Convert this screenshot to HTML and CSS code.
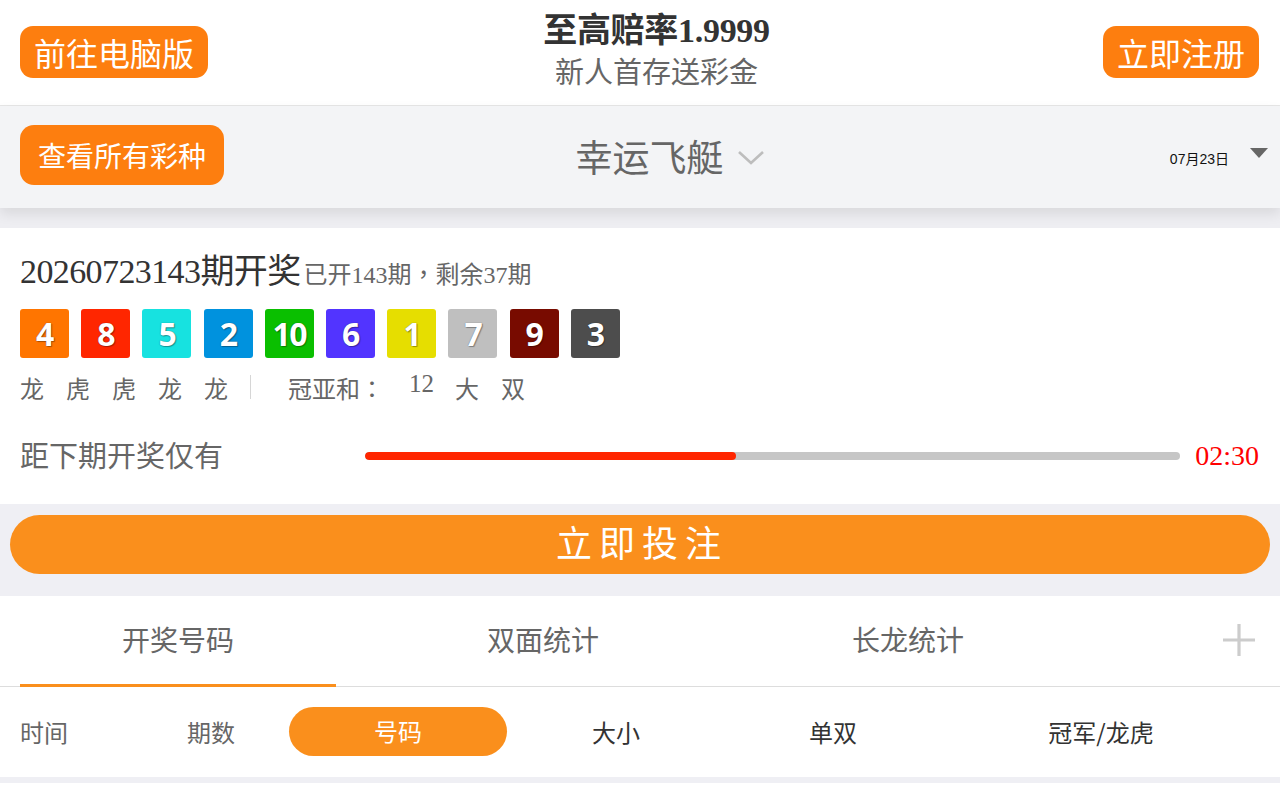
FILE: index.html
```html
<!DOCTYPE html>
<html lang="zh-CN">
<head>
<meta charset="utf-8">
<title>幸运飞艇</title>
<link rel="stylesheet" href="styles.css">
</head>
<body>
<header class="top">
  <a class="btn-orange btn-top">前往电脑版</a>
  <div class="promo">
    <div class="promo-title">至高赔率1.9999</div>
    <div class="promo-sub">新人首存送彩金</div>
  </div>
  <a class="btn-orange btn-top">立即注册</a>
</header>

<section class="lottery-bar">
  <div class="bar-left"><a class="btn-orange btn-all">查看所有彩种</a></div>
  <div class="bar-center">
    <span class="game-name">幸运飞艇</span>
    <svg class="chev" width="28" height="16" viewBox="0 0 28 16"><path d="M2 2 L14 13 L26 2" fill="none" stroke="#bdbdbd" stroke-width="2.6"/></svg>
  </div>
  <div class="bar-right">
    <span class="date">07月23日</span>
    <span class="tri"></span>
  </div>
</section>

<div class="shadow-gap"></div>

<section class="result">
  <div class="issue"><span class="issue-no">20260723143期开奖</span><span class="issue-info">已开143期<span class="punct" lang="zh-TW">，</span>剩余37期</span></div>
  <div class="balls">
    <span class="ball c1">4</span>
    <span class="ball c2">8</span>
    <span class="ball c3">5</span>
    <span class="ball c4">2</span>
    <span class="ball c5">10</span>
    <span class="ball c6">6</span>
    <span class="ball c7">1</span>
    <span class="ball c8">7</span>
    <span class="ball c9">9</span>
    <span class="ball c10">3</span>
  </div>
  <div class="stats">
    <span>龙</span><span>虎</span><span>虎</span><span>龙</span><span>龙</span>
    <span class="sep"></span>
    <span>冠亚和<span class="punct" lang="zh-TW">：</span></span><span class="num">12</span><span>大</span><span>双</span>
  </div>
  <div class="countdown">
    <span class="cd-label">距下期开奖仅有</span>
    <div class="progress"><div class="progress-fill" style="width:45.5%"></div></div>
    <span class="cd-time">02:30</span>
  </div>
</section>

<section class="bet-wrap">
  <a class="bet-btn">立即投注</a>
</section>

<section class="tabs-box">
  <nav class="tabs">
    <span class="tab active">开奖号码</span>
    <span class="tab">双面统计</span>
    <span class="tab">长龙统计</span>
    <svg class="plus" width="34" height="34" viewBox="0 0 34 34"><path d="M17 1 V33 M1 17 H33" stroke="#cccccc" stroke-width="3.2"/></svg>
  </nav>
  <div class="subtabs">
    <span class="st st-left muted">时间</span>
    <span class="st muted">期数</span>
    <span class="st"><span class="pill">号码</span></span>
    <span class="st">大小</span>
    <span class="st">单双</span>
    <span class="st">冠军/龙虎</span>
  </div>
</section>
<div class="bottom-gap"></div>
<div class="bottom-white"></div>
</body>
</html>
```

FILE: styles.css
```css
* { box-sizing: border-box; }
html, body { margin: 0; padding: 0; }
body {
  width: 1280px;
  height: 800px;
  overflow: hidden;
  background: #ffffff;
  font-family: "Liberation Serif", "Noto Sans CJK SC", serif;
  color: #333;
}
a { text-decoration: none; }

.btn-orange {
  display: inline-flex;
  align-items: center;
  justify-content: center;
  background: #fd7e0f;
  color: #fff;
  font-family: "Noto Sans CJK SC", sans-serif;
}

.top {
  height: 106px;
  border-bottom: 1px solid #e6e6e6;
  display: flex;
  align-items: center;
  justify-content: space-between;
  padding: 0 21px 0 20px;
}
.btn-top {
  height: 52px;
  padding: 0 14px;
  font-size: 32px;
  border-radius: 13px;
  margin-top: -1px;
}
.promo { text-align: center; margin-left: 2px; margin-top: -6px; }
.promo-title {
  font-size: 34px;
  font-weight: 700;
  line-height: 40px;
  color: #333;
  letter-spacing: -0.3px;
}
.promo-sub {
  font-family: "Noto Sans CJK SC", sans-serif;
  font-size: 29px;
  line-height: 38px;
  color: #666;
}

.lottery-bar {
  height: 102px;
  background: #f3f4f6;
  display: grid;
  grid-template-columns: 1fr auto 1fr;
  align-items: center;
  padding: 0 12px 0 20px;
  position: relative;
  z-index: 1;
  box-shadow: 0 6px 12px rgba(0,0,0,0.09);
}
.btn-all {
  height: 60px;
  padding: 0 18px;
  font-size: 28px;
  border-radius: 14px;
  margin-top: -4px;
}
.bar-center {
  display: flex;
  align-items: center;
  margin-left: 52px;
}
.game-name {
  font-family: "Noto Sans CJK SC", sans-serif;
  font-size: 37px;
  color: #666;
  margin-top: -3px;
}
.chev { margin-left: 13px; margin-top: 2px; }
.bar-right {
  display: flex;
  align-items: center;
  justify-content: flex-end;
  margin-top: -2px;
}
.date {
  font-family: "Liberation Sans", "Noto Sans CJK SC", sans-serif;
  font-size: 14px;
  color: #111;
  margin-top: 4px;
}
.tri {
  width: 0; height: 0;
  border-left: 9px solid transparent;
  border-right: 9px solid transparent;
  border-top: 10px solid #666;
  margin-left: 21px;
  margin-top: -6px;
}

.shadow-gap {
  height: 20px;
  background: #eeeef2;
}

.result {
  background: #fff;
  padding: 22px 21px 18px 20px;
}
.issue { line-height: 44px; height: 44px; }
.issue-no { font-size: 34px; color: #333; letter-spacing: -0.6px; }
.issue-info { font-size: 24px; color: #666; margin-left: 3px; }
.punct { font-family: "Noto Sans CJK TC", sans-serif; }

.balls {
  display: flex;
  gap: 12.2px;
  margin-top: 15px;
}
.ball {
  width: 49px;
  height: 49px;
  border-radius: 3px;
  display: flex;
  align-items: center;
  justify-content: center;
  font-family: "Open Sans", "DejaVu Sans", sans-serif;
  font-weight: 700;
  font-size: 32px;
  letter-spacing: -1.5px;
  color: #fff;
  text-shadow: 0 0 1px rgba(0,0,0,0.55), 1px 1px 1px rgba(0,0,0,0.3);
}
.c1 { background: #ff7500; }
.c2 { background: #ff2600; }
.c3 { background: #17e2e0; }
.c4 { background: #0092de; }
.c5 { background: #0abf00; }
.c6 { background: #5234ff; }
.c7 { background: #e6de00; }
.c8 { background: #bfbfbf; }
.c9 { background: #780b00; }
.c10 { background: #4d4d4d; }

.stats {
  display: flex;
  align-items: center;
  gap: 22px;
  margin-top: 11px;
  height: 36px;
  font-family: "Noto Sans CJK SC", sans-serif;
  font-size: 24px;
  color: #666;
}
.stats .sep {
  width: 1px;
  height: 24px;
  background: #d6d6d6;
  margin-right: 15px;
}
.stats .num {
  font-family: "Liberation Serif", serif;
  font-size: 25px;
  margin-top: -6px;
  margin-left: 3px;
  margin-right: -1px;
}

.countdown {
  display: flex;
  align-items: center;
  height: 60px;
  margin-top: 21px;
}
.cd-label {
  width: 345px;
  font-family: "Noto Sans CJK SC", sans-serif;
  font-size: 29px;
  color: #666;
  margin-top: -4px;
}
.progress {
  flex: 1;
  height: 8px;
  border-radius: 4px;
  background: #c6c6c6;
  overflow: hidden;
}
.progress-fill {
  height: 100%;
  background: #ff2600;
  border-radius: 4px;
}
.cd-time {
  margin-left: 15px;
  font-size: 28px;
  color: #ff0000;
}

.bet-wrap {
  background: #efeff4;
  padding: 11px 10px 22px;
}
.bet-btn {
  display: flex;
  align-items: center;
  justify-content: center;
  height: 59px;
  border-radius: 30px;
  background: #fa8f1c;
  color: #fff;
  font-family: "Noto Sans CJK SC", sans-serif;
  font-size: 36px;
  letter-spacing: 7px;
  padding-left: 4px;
  padding-bottom: 7px;
}

.tabs-box { background: #fff; }
.tabs {
  display: flex;
  align-items: center;
  height: 91px;
  border-bottom: 1px solid #dddddd;
  padding: 0 24px 0 20px;
}
.tab {
  width: 316px;
  height: 90px;
  display: flex;
  align-items: center;
  justify-content: center;
  font-family: "Noto Sans CJK SC", sans-serif;
  font-size: 28px;
  color: #666;
  margin-right: 49px;
  border-bottom: 3px solid transparent;
  padding-bottom: 3px;
  margin-bottom: -1px;
}
.tab.active { border-bottom-color: #fa8f1c; }
.plus { margin-left: auto; margin-top: -2px; }

.subtabs {
  display: grid;
  grid-template-columns: 120px 142px 232px 204px 230px 306px;
  align-items: center;
  height: 90px;
  padding-left: 20px;
  padding-bottom: 2px;
  font-family: "Noto Sans CJK SC", sans-serif;
  font-size: 24px;
  color: #333;
}
.st { text-align: center; }
.st-left { text-align: left; }
.muted { color: #666; }
.pill {
  display: inline-flex;
  align-items: center;
  justify-content: center;
  width: 218px;
  height: 49px;
  border-radius: 25px;
  background: #fa8f1c;
  color: #fff;
  padding-bottom: 2px;
}
.bottom-gap { height: 6px; background: #efeff4; }
.bottom-white { height: 40px; background: #fff; }
```
